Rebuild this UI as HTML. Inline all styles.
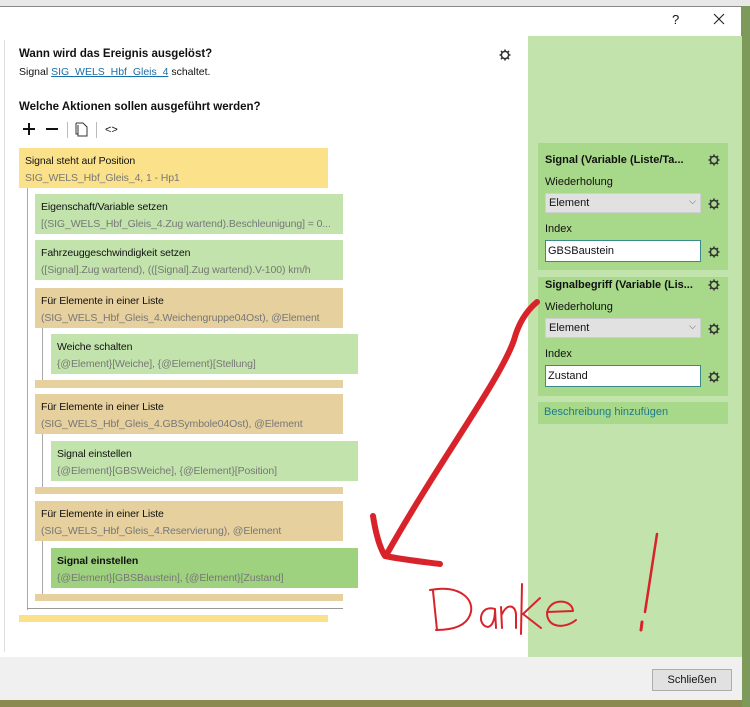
<!DOCTYPE html>
<html><head><meta charset="utf-8"><style>
*{margin:0;padding:0;box-sizing:border-box}
body{width:750px;height:707px;position:relative;overflow:hidden;background:#8c8a50;font-family:"Liberation Sans",sans-serif;font-size:11px;color:#111}
.a{position:absolute}
.box{position:absolute;padding:5px 0 0 6px;line-height:17px;white-space:nowrap;overflow:hidden;font-size:10.5px;letter-spacing:-0.1px}
.box .s{color:#777}
.g{background:#c3e3ad}.t{background:#e6d09e}.y{background:#fbe28a}
.lab{position:absolute;font-size:11px;white-space:nowrap}
.sel{position:absolute;left:545px;width:156px;height:20px;background:#e1e1e1;border:1px solid #cfcfcf;padding:3px 3px;font-size:11px}
.inp{position:absolute;left:545px;width:156px;height:22px;background:#fff;border:1px solid #3d8a8e;padding:4px 2px;font-size:11px}
.gear{position:absolute;width:14px;height:14px}
</style></head><body>
<div class="a" style="left:742px;top:0;width:8px;height:707px;background:#7e9a5a"></div>
<div class="a" style="left:0;top:0;width:750px;height:6px;background:#e8e8e8"></div>
<div class="a" style="left:0;top:6px;width:742px;height:694px;background:#fff;border:1px solid #888;border-left:none"></div>
<div class="a" style="left:672px;top:12px;font-size:13px">?</div>
<svg class="a" style="left:713px;top:13px" width="12" height="12"><path d="M1 1L11 11M11 1L1 11" stroke="#222" stroke-width="1.1"/></svg>
<div class="a" style="left:4px;top:40px;width:1px;height:612px;background:#ddd"></div>
<div class="a" style="left:528px;top:36px;width:214px;height:621px;background:#c2e3ab"></div>
<div class="a" style="left:0;top:657px;width:742px;height:43px;background:#f0f0f0"></div>
<div class="a" style="left:652px;top:669px;width:80px;height:22px;background:#e1e1e1;border:1px solid #adadad;text-align:center;line-height:20px">Schließen</div>

<div class="a" style="left:19px;top:48px;font-weight:bold;font-size:11.5px">Wann wird das Ereignis ausgelöst?</div>
<div class="a" style="left:19px;top:66px;font-size:10.5px">Signal <span style="color:#1a6ea8;text-decoration:underline">SIG_WELS_Hbf_Gleis_4</span> schaltet.</div>
<div class="a" style="left:19px;top:101px;font-weight:bold;font-size:11.5px">Welche Aktionen sollen ausgeführt werden?</div>
<svg class="a" style="left:23px;top:123px" width="12" height="12"><path d="M6 0v12M0 6h12" stroke="#111" stroke-width="2"/></svg>
<svg class="a" style="left:46px;top:123px" width="12" height="12"><path d="M0 6h12" stroke="#111" stroke-width="2"/></svg>
<div class="a" style="left:67px;top:122px;width:1px;height:16px;background:#bbb"></div>
<div class="a" style="left:96px;top:122px;width:1px;height:16px;background:#bbb"></div>
<svg class="a" style="left:74px;top:121px" width="16" height="17"><path d="M2 2h7l4 4v9H4V4" fill="none" stroke="#333"/><path d="M2 2v11h2" fill="none" stroke="#333"/></svg>
<div class="a" style="left:105px;top:124px;font-size:11px">&lt;&gt;</div>

<div class="box y" style="left:19px;top:148px;width:309px;height:40px">Signal steht auf Position<br><span class="s">SIG_WELS_Hbf_Gleis_4, 1 - Hp1</span></div>
<div class="a" style="left:27px;top:188px;width:1px;height:422px;background:#aaa"></div>
<div class="box g" style="left:35px;top:194px;width:308px;height:40px">Eigenschaft/Variable setzen<br><span class="s">[(SIG_WELS_Hbf_Gleis_4.Zug wartend).Beschleunigung] = 0...</span></div>
<div class="box g" style="left:35px;top:240px;width:308px;height:40px">Fahrzeuggeschwindigkeit setzen<br><span class="s">([Signal].Zug wartend), (([Signal].Zug wartend).V-100) km/h</span></div>
<div class="box t" style="left:35px;top:288px;width:308px;height:40px">Für Elemente in einer Liste<br><span class="s">(SIG_WELS_Hbf_Gleis_4.Weichengruppe04Ost), @Element</span></div>
<div class="a" style="left:42px;top:328px;width:1px;height:55px;background:#aaa"></div>
<div class="box g" style="left:51px;top:334px;width:307px;height:40px">Weiche schalten<br><span class="s">{@Element}[Weiche], {@Element}[Stellung]</span></div>
<div class="a t" style="left:35px;top:380px;width:308px;height:8px"></div>
<div class="box t" style="left:35px;top:394px;width:308px;height:40px">Für Elemente in einer Liste<br><span class="s">(SIG_WELS_Hbf_Gleis_4.GBSymbole04Ost), @Element</span></div>
<div class="a" style="left:42px;top:434px;width:1px;height:55px;background:#aaa"></div>
<div class="box g" style="left:51px;top:441px;width:307px;height:40px">Signal einstellen<br><span class="s">{@Element}[GBSWeiche], {@Element}[Position]</span></div>
<div class="a t" style="left:35px;top:487px;width:308px;height:7px"></div>
<div class="box t" style="left:35px;top:501px;width:308px;height:40px">Für Elemente in einer Liste<br><span class="s">(SIG_WELS_Hbf_Gleis_4.Reservierung), @Element</span></div>
<div class="a" style="left:42px;top:541px;width:1px;height:55px;background:#aaa"></div>
<div class="box" style="left:51px;top:548px;width:307px;height:40px;background:#9fd27f"><b>Signal einstellen</b><br><span class="s">{@Element}[GBSBaustein], {@Element}[Zustand]</span></div>
<div class="a t" style="left:35px;top:594px;width:308px;height:7px"></div>
<div class="a" style="left:27px;top:608px;width:316px;height:1px;background:#999"></div>
<div class="a y" style="left:19px;top:615px;width:309px;height:7px"></div>

<div class="a" style="left:538px;top:143px;width:190px;height:127px;background:#a8d88a"></div>
<div class="a" style="left:538px;top:277px;width:190px;height:119px;background:#a8d88a"></div>
<div class="a" style="left:538px;top:402px;width:190px;height:22px;background:#a8d88a"></div>
<div class="lab" style="left:545px;top:154px;font-weight:bold">Signal (Variable (Liste/Ta...</div>
<div class="lab" style="left:545px;top:176px">Wiederholung</div>
<div class="sel" style="top:193px">Element<span style="position:absolute;right:4px;top:2px;font-size:9px;color:#555">⌵</span></div>
<div class="lab" style="left:545px;top:223px">Index</div>
<div class="inp" style="top:240px">GBSBaustein</div>
<div class="lab" style="left:545px;top:279px;font-weight:bold">Signalbegriff (Variable (Lis...</div>
<div class="lab" style="left:545px;top:301px">Wiederholung</div>
<div class="sel" style="top:318px">Element<span style="position:absolute;right:4px;top:2px;font-size:9px;color:#555">⌵</span></div>
<div class="lab" style="left:545px;top:348px">Index</div>
<div class="inp" style="top:365px">Zustand</div>
<div class="lab" style="left:544px;top:406px;color:#1e7a8a">Beschreibung hinzufügen</div>

<svg width="0" height="0" style="position:absolute"><defs><g id="gr"><circle cx="7" cy="7" r="3.6" fill="none" stroke="#333" stroke-width="1.5"/><path d="M7 1.5v2.5M7 10v2.5M1.5 7h2.5M10 7h2.5M3 3l1.8 1.8M9.2 9.2L11 11M11 3L9.2 4.8M4.8 9.2L3 11" stroke="#333" stroke-width="1.6"/></g></defs></svg>
<svg class="gear" style="left:498px;top:48px"><use href="#gr"/></svg>
<svg class="gear" style="left:707px;top:153px"><use href="#gr"/></svg>
<svg class="gear" style="left:707px;top:197px"><use href="#gr"/></svg>
<svg class="gear" style="left:707px;top:245px"><use href="#gr"/></svg>
<svg class="gear" style="left:707px;top:278px"><use href="#gr"/></svg>
<svg class="gear" style="left:707px;top:322px"><use href="#gr"/></svg>
<svg class="gear" style="left:707px;top:370px"><use href="#gr"/></svg>

<svg class="a" style="left:0;top:0" width="750" height="707">
<g fill="none" stroke="#d9232b" stroke-linecap="round" stroke-linejoin="round">
<path d="M537 302 C525 312 518 325 514 340 C500 380 440 460 388 552" stroke-width="6"/>
<path d="M373 516 C376 535 380 548 385 556 C405 560 425 562 440 564" stroke-width="6"/>
<g stroke-width="2">
<path d="M433 591 L437 630"/><path d="M430 590 C460 584 476 600 470 615 C465 628 448 630 436 630"/>
<path d="M495 609 C480 604 476 625 488 627 C495 625 495 612 495 609 L496 628"/>
<path d="M501 607 L502 628 M502 614 C508 602 516 606 516 615 L516 628"/>
<path d="M522 584 L521 634 M540 598 L523 614 L541 628"/>
<path d="M547 612 L573 611 C572 598 548 598 547 614 C548 628 565 629 576 620"/>
<path d="M657 534 L645 612" stroke-width="2.5"/><path d="M642 622 L641 630" stroke-width="3"/>
</g></g></svg>
</body></html>
